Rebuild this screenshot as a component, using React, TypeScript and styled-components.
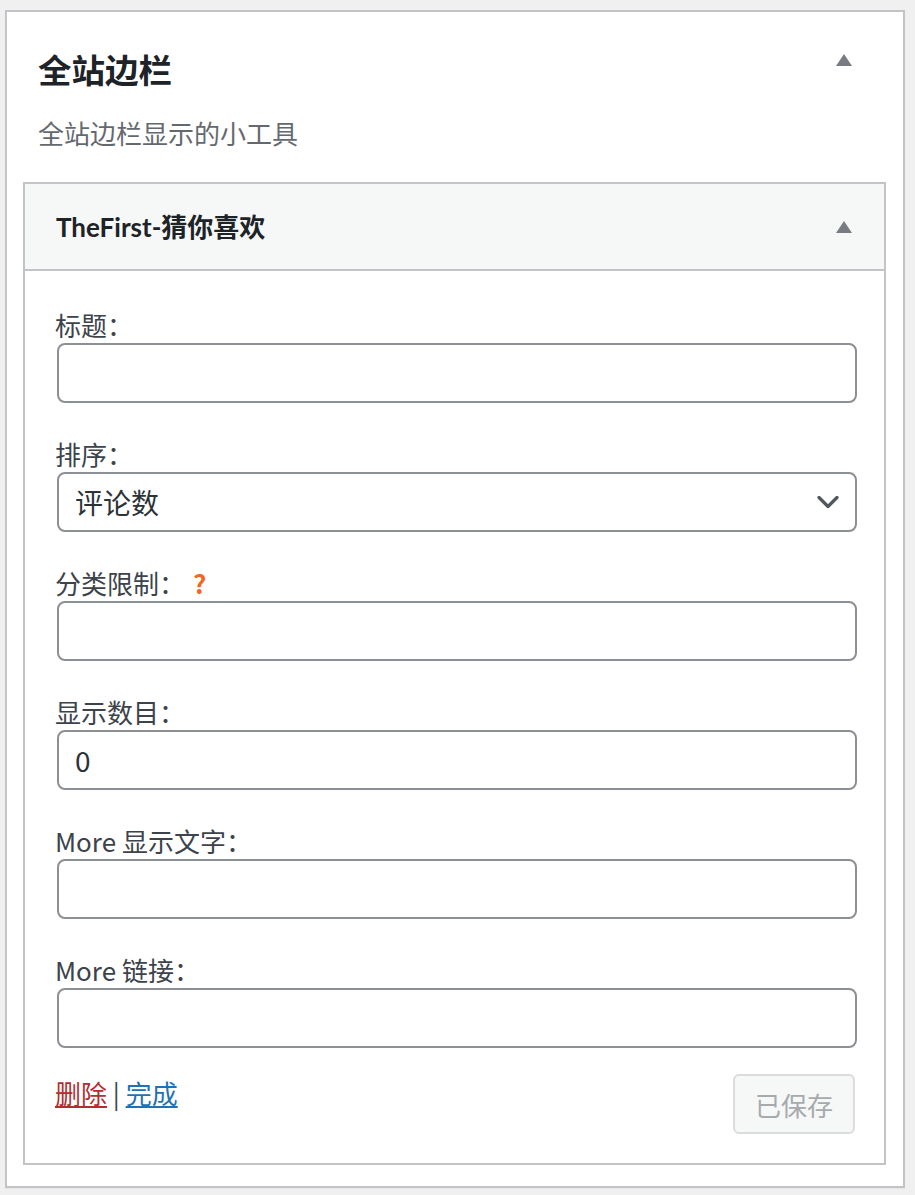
import React from "react";
import styled, { createGlobalStyle } from "styled-components";

const GlobalStyle = createGlobalStyle`
  html, body {
    margin: 0;
    padding: 0;
    background: #f0f0f1;
    font-family: "Noto Sans CJK SC", "Noto Sans", sans-serif;
  }
  * { box-sizing: border-box; }
`;

const Page = styled.div`
  padding: 10px 10px 7px 5px;
`;

const Panel = styled.section`
  background: #fff;
  border: 2px solid #c3c4c7;
  padding: 0 17px 21px 16px;
  box-shadow: 0 1px 1px rgba(0, 0, 0, 0.04);
`;

const PanelHead = styled.div`
  display: flex;
  justify-content: space-between;
  align-items: flex-start;
  padding: 37px 34px 0 15px;
`;

const PanelTitle = styled.h2`
  margin: 0;
  font-size: 33.5px;
  line-height: 40px;
  font-weight: 700;
  color: #1d2327;
`;

const Toggle = styled.svg<{ $top: number }>`
  display: block;
  width: 16px;
  height: 12px;
  margin-top: ${(p) => p.$top}px;
  flex-shrink: 0;
`;

const Description = styled.p`
  margin: 26px 0 31px 15px;
  font-size: 26px;
  line-height: 36px;
  color: #646970;
`;

const Widget = styled.div`
  border: 2px solid #c3c4c7;
  background: #fff;
`;

const WidgetHead = styled.div`
  height: 87px;
  display: flex;
  align-items: center;
  justify-content: space-between;
  padding: 0 32px 0 31px;
  background: #f6f7f7;
  border-bottom: 2px solid #c3c4c7;
`;

const WidgetTitle = styled.h3`
  margin: 0;
  font-family: "Lato", "Noto Sans CJK SC", sans-serif;
  font-size: 26px;
  line-height: 36px;
  font-weight: 700;
  color: #1d2327;
`;

const WidgetBody = styled.div`
  display: flex;
  flex-direction: column;
  padding: 36px 27px 29px 30px;
`;

const Field = styled.div`
  & + & {
    margin-top: 33px;
  }
`;

const Label = styled.label`
  display: block;
  font-size: 26px;
  line-height: 36px;
  color: #3c434a;
`;

const Help = styled.span`
  margin-left: 8px;
  font-weight: 700;
  color: #f0681e;
`;

const TextInput = styled.input`
  display: block;
  width: calc(100% - 2px);
  height: 60px;
  margin: 0 0 0 2px;
  padding: 0 16px;
  border: 2px solid #8c8f94;
  border-radius: 8px;
  background: #fff;
  font-family: inherit;
  font-size: 28px;
  color: #2c3338;
  outline: none;
`;

const SelectWrap = styled.div`
  position: relative;
  width: calc(100% - 2px);
  margin-left: 2px;
`;

const Select = styled.select`
  display: block;
  width: 100%;
  height: 60px;
  padding: 0 56px 0 16px;
  border: 2px solid #8c8f94;
  border-radius: 8px;
  background: #fff;
  appearance: none;
  -webkit-appearance: none;
  font-family: inherit;
  font-size: 28px;
  color: #2c3338;
  outline: none;
`;

const Chevron = styled.svg`
  position: absolute;
  right: 18px;
  top: 50%;
  width: 22px;
  height: 13px;
  transform: translateY(-50%);
  pointer-events: none;
`;

const Footer = styled.div`
  display: flex;
  justify-content: space-between;
  align-items: flex-start;
  margin-top: 26px;
`;

const Links = styled.div`
  font-size: 26px;
  line-height: 38px;
  color: #3c434a;
`;

const ActionLink = styled.a<{ $tone: "danger" | "primary" }>`
  color: ${(p) => (p.$tone === "danger" ? "#b32d2e" : "#2271b1")};
  text-decoration: underline;
  cursor: pointer;
`;

const SavedButton = styled.button`
  width: 122px;
  height: 60px;
  margin-right: 2px;
  padding: 0;
  border: 2px solid #dcdcde;
  border-radius: 6px;
  background: #f6f7f7;
  color: #a7aaad;
  font-family: inherit;
  font-size: 26px;
`;

const Arrow = ({ top }: { top: number }) => (
  <Toggle $top={top} viewBox="0 0 16 12">
    <polygon points="8,0 16,12 0,12" fill="#787c82" />
  </Toggle>
);

export default function App() {
  return (
    <>
      <GlobalStyle />
      <Page>
        <Panel>
          <PanelHead>
            <PanelTitle>全站边栏</PanelTitle>
            <Arrow top={5} />
          </PanelHead>
          <Description>全站边栏显示的小工具</Description>
          <Widget>
            <WidgetHead>
              <WidgetTitle>TheFirst-猜你喜欢</WidgetTitle>
              <Arrow top={0} />
            </WidgetHead>
            <WidgetBody>
              <Field>
                <Label>标题：</Label>
                <TextInput type="text" defaultValue="" />
              </Field>
              <Field>
                <Label>排序：</Label>
                <SelectWrap>
                  <Select defaultValue="comments">
                    <option value="comments">评论数</option>
                    <option value="views">浏览数</option>
                    <option value="date">发布时间</option>
                  </Select>
                  <Chevron viewBox="0 0 22 13">
                    <polyline
                      points="2,2 11,11 20,2"
                      fill="none"
                      stroke="#50575e"
                      strokeWidth="3.2"
                      strokeLinecap="round"
                      strokeLinejoin="round"
                    />
                  </Chevron>
                </SelectWrap>
              </Field>
              <Field>
                <Label>
                  分类限制：<Help>?</Help>
                </Label>
                <TextInput type="text" defaultValue="" />
              </Field>
              <Field>
                <Label>显示数目：</Label>
                <TextInput type="text" defaultValue="0" />
              </Field>
              <Field>
                <Label>More 显示文字：</Label>
                <TextInput type="text" defaultValue="" />
              </Field>
              <Field>
                <Label>More 链接：</Label>
                <TextInput type="text" defaultValue="" />
              </Field>
              <Footer>
                <Links>
                  <ActionLink $tone="danger">删除</ActionLink> |{" "}
                  <ActionLink $tone="primary">完成</ActionLink>
                </Links>
                <SavedButton type="button" disabled>
                  已保存
                </SavedButton>
              </Footer>
            </WidgetBody>
          </Widget>
        </Panel>
      </Page>
    </>
  );
}
